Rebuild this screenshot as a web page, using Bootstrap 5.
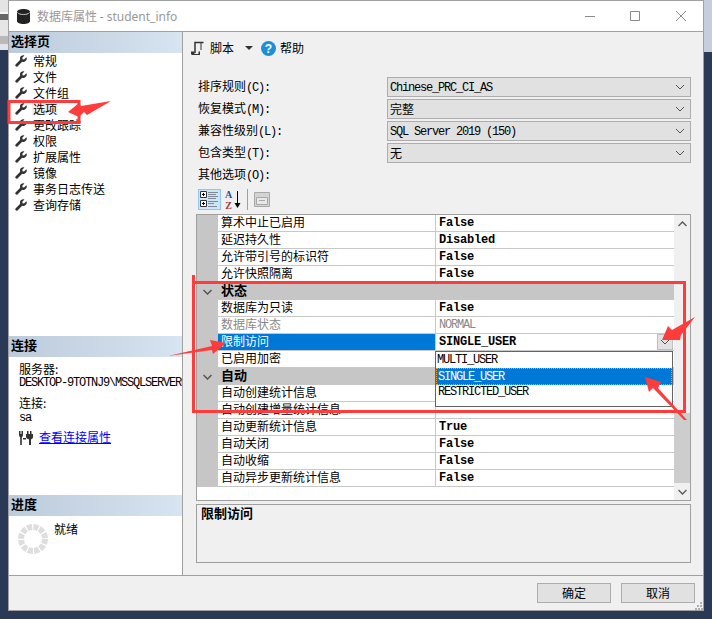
<!doctype html>
<html lang="zh-CN">
<head>
<meta charset="utf-8">
<title>数据库属性 - student_info</title>
<link rel="stylesheet" href="https://cdn.jsdelivr.net/npm/bootstrap@5.3.0/dist/css/bootstrap.min.css">
<style>
html,body{margin:0;width:712px;height:619px;overflow:hidden;background:#2a3a56}
body{font:12px/12px "Noto Sans CJK SC","Liberation Sans",sans-serif;color:#000}
.lat{font-family:"Liberation Mono","Noto Sans CJK SC",monospace;font-size:12px;letter-spacing:-1.2px}
.latb{font-family:"Liberation Mono","Noto Sans CJK SC",monospace;font-size:12px;font-weight:700;letter-spacing:-.2px}
.stage{width:712px;height:619px;position:relative}
.edge-l{width:8px;height:619px;flex:none;background:linear-gradient(#e4e4e4 0 12px,#f6f6f6 12px 14px,#666 14px 20px,#e6e6e6 20px 36px,#b9b9b9 36px 44px,#dfe3ea 44px 50px,#2a3a56 50px)}
.edge-r{width:8px;height:619px;flex:none;background:linear-gradient(#c6cddd 0 52px,#2a3a56 52px)}
.win{width:696px;height:611px;flex:none;border:1px solid #a0a0a0;background:#f0f0f0}
.titlebar{height:31px;flex:none;background:#fff;border-bottom:1px solid #a0a0a0;padding-left:8px}
.titlebar .ttl{color:#999;margin-left:7px;font-size:12px}
.titlebar .ttl b{font:400 12px "Noto Sans",sans-serif}
.wctl{margin-left:auto}
.wctl svg{display:block}
.mainarea{height:544px;flex:none;border-bottom:1px solid #a0a0a0}
.leftpane{width:174px;flex:none;background:#fff;border-right:1px solid #a0a0a0}
.paneh{height:21px;background:linear-gradient(90deg,#bccbdb,#d7e4f1);font-weight:700;padding:0 0 4px 2px;font-size:13px}
.sel-pane{height:304px}
.conn-pane{height:159px}
.prog-pane{height:79px}
.navlist{border-radius:0}
.navlist .list-group-item{border:0;background:none;padding:0 0 0 6px;height:16px;color:#000;font-size:12px;gap:6px}
.navlist .cur{background:#f0f0f0;padding:0 1px;margin-left:-1px}
.conn-body{padding:6px 0 0 10px;white-space:nowrap}
.lh{height:12px;line-height:12px}
.clipline{overflow:hidden;margin-top:2px}
.conn-link{color:#00f;text-decoration:underline;font-size:12px;line-height:14px;margin-top:-2px}
.rightpane{width:520px;flex:none;padding:0 12px 0 13px}
.rtool{height:32px;margin-left:-5px;font-size:12px}
.caret-d{width:0;height:0;border:4px solid transparent;border-top-color:#333;border-bottom:0;margin:0 8px 0 11px}
.frow{height:22px;padding-left:2px}
.frow .flab{width:189px;flex:none;font-size:12px;padding-top:3px}
.frow .form-select{height:20px;min-height:0;width:304px;padding:0 2px;border:1px solid #adadad;border-radius:0;background-color:#e1e1e1;background-size:10px 7px;background-position:right 5px center;color:#000;line-height:18px;box-shadow:none;background-image:url("data:image/svg+xml,%3csvg xmlns='http://www.w3.org/2000/svg' viewBox='0 0 10 7'%3e%3cpath fill='none' stroke='%23555' d='M1 1l4 4 4-4'/%3e%3c/svg%3e")}
.frow .sel-mono{font:12px "Liberation Mono",monospace;letter-spacing:-1.2px;padding-top:2px}
.sel-zh{font:12px "Noto Sans CJK SC",sans-serif}
.ptools{height:21px;margin-top:2px;padding-left:2px}
.sortbtn{width:23px;height:21px;background:#cde6f7;border:1px solid #8fc5ee;padding:0;border-radius:0}
.sepv{width:1px;height:21px;background:#a0a0a0;margin:0 6px 0 6px}
.pg{height:287px;margin-top:4px;border:1px solid #a0a0a0;background:#fff;position:relative}
.pg-rows{width:477px;flex:none}
.pg-row{height:17px;border-bottom:1px solid #c8c8c8}
.gut{width:21px;height:17px;flex:none;background:#c6c6c6;margin-bottom:-1px}
.pname{width:218px;flex:none;padding-left:3px;border-right:1px solid #c8c8c8;height:16px;line-height:14px;font-size:12px}
.pval{flex:1;padding-left:3px;height:16px;line-height:17px;position:relative}
.pg-row.dis .pname{color:#8a8a8a}
.pg-row.dis .pval{color:#8a8a8a;font-weight:400;letter-spacing:-1.2px}
.pg-row.on .pname{background:#0078d7;color:#fff}
.ddbtn{position:absolute;right:1px;top:0;width:16px;height:16px;background:#e1e1e1;border:1px solid #c0c0c0;display:flex;align-items:center;justify-content:center}
.pcat{height:17px;background:#c6c6c6;font-weight:700;font-size:13px}
.pcat .chev{width:21px;flex:none;display:flex;justify-content:center}
.pcat .cattxt{padding:0 0 3px 3px}
.pscroll{width:16px;flex:none;background:#f0f0f0}
.pscroll .sc-a{height:17px}
.pscroll .sc-t{height:70px;background:#cdcdcd;margin-top:auto}
.pgdrop.dropdown-menu{position:absolute;left:238px;top:136px;width:238px;height:56px;min-width:0;padding:0;margin:0;border:1px solid #646464;border-radius:0;background:#fff;z-index:2}
.pgdrop .dropdown-item{height:16px;padding:0 0 0 1px;font:12px/17px "Liberation Mono",monospace;letter-spacing:-1.2px;color:#000}
.pgdrop .dropdown-item.active{height:17px;line-height:18px;background:#0078d7;color:#fff;outline:1px dotted #f0a030;outline-offset:-1px;padding-left:2px}
.pgdrop .dropdown-item:last-child{padding-left:2px;line-height:15px}
.descbox{height:59px;margin-top:3px;border:1px solid #a0a0a0;padding:2px 4px;font-weight:700;font-size:13px}
.footbar{height:34px;flex:none;padding:7px 8px 0 0;gap:10px;position:relative}
.footbar .btn{width:74px;height:20px;padding:0;border:1px solid #adadad;border-radius:0;background:#e1e1e1;color:#000;font:12px/18px "Noto Sans CJK SC",sans-serif}
.grip{position:absolute;right:0;bottom:0}
.marks{position:absolute;left:0;top:0;pointer-events:none;z-index:5}
</style>
</head>
<body>
<svg width="0" height="0" class="d-none">
  <symbol id="wrench" viewBox="0 0 14 14">
    <path fill="#333" d="M13.2 2.7 10.6 5.2 8.8 4.9 8.5 3.2 11 .7C8.9-.2 6.4.9 5.9 3.1 5.7 3.9 5.8 4.8 6.1 5.5L.9 10.7C.1 11.5.2 12.5.8 13.1 1.4 13.7 2.4 13.8 3.2 13L8.400 7.800C10.700 8.700 13.100 7.400 13.700 5.100 13.900 4.300 13.700 3.400 13.200 2.700Z"/>
  </symbol>
</svg>
<div class="stage d-flex">
  <div class="edge-l"></div>
  <div class="win d-flex flex-column">
    <div class="titlebar d-flex align-items-center">
      <svg width="13" height="15" viewBox="0 0 13 15"><path fill="#222" d="M0 3C0 1 3 0 6.500 0S13 1 13 3V12C13 14 10 15 6.500 15S0 14 0 12Z"/><path fill="none" stroke="#ccc" d="M.5 3.500C1.500 5 4 5.500 6.500 5.500S11.500 5 12.500 3.500"/></svg>
      <span class="ttl">数据库属性 <b>- student_info</b></span>
      <div class="wctl d-flex align-items-center">
        <svg width="102" height="14" viewBox="0 0 102 14"><path stroke="#8a8a8a" d="M0 7.500H10"/><path fill="none" stroke="#8a8a8a" d="M45.500 2.500h9v9h-9z"/><path fill="none" stroke="#8a8a8a" d="M91 2l10 10M101 2L91 12"/></svg>
        <div style="width:16px"></div>
      </div>
    </div>
    <div class="mainarea d-flex">
      <div class="leftpane">
        <div class="sel-pane">
          <div class="paneh d-flex align-items-center">选择页</div>
          <div class="list-group navlist">
            <div class="list-group-item d-flex align-items-center"><svg width="12" height="12"><use href="#wrench"/></svg><span>常规</span></div>
            <div class="list-group-item d-flex align-items-center"><svg width="12" height="12"><use href="#wrench"/></svg><span>文件</span></div>
            <div class="list-group-item d-flex align-items-center"><svg width="12" height="12"><use href="#wrench"/></svg><span>文件组</span></div>
            <div class="list-group-item d-flex align-items-center"><svg width="12" height="12"><use href="#wrench"/></svg><span class="cur">选项</span></div>
            <div class="list-group-item d-flex align-items-center"><svg width="12" height="12"><use href="#wrench"/></svg><span>更改跟踪</span></div>
            <div class="list-group-item d-flex align-items-center"><svg width="12" height="12"><use href="#wrench"/></svg><span>权限</span></div>
            <div class="list-group-item d-flex align-items-center"><svg width="12" height="12"><use href="#wrench"/></svg><span>扩展属性</span></div>
            <div class="list-group-item d-flex align-items-center"><svg width="12" height="12"><use href="#wrench"/></svg><span>镜像</span></div>
            <div class="list-group-item d-flex align-items-center"><svg width="12" height="12"><use href="#wrench"/></svg><span>事务日志传送</span></div>
            <div class="list-group-item d-flex align-items-center"><svg width="12" height="12"><use href="#wrench"/></svg><span>查询存储</span></div>
          </div>
        </div>
        <div class="conn-pane">
          <div class="paneh d-flex align-items-center">连接</div>
          <div class="conn-body">
            <div class="lh">服务器:</div>
            <div class="lh lat clipline">DESKTOP-9TOTNJ9\MSSQLSERVER01</div>
            <div class="lh" style="margin-top:8px">连接:</div>
            <div class="lh lat" style="margin-top:3px">sa</div>
            <div class="d-flex align-items-center" style="margin-top:7px;height:14px;gap:5px">
              <svg width="15" height="14" viewBox="0 0 15 14"><path fill="#333" d="M0 0h1.500v3h1V0H4v3.500C4 5 3.200 6 2.800 6.500V14H1.200V6.500C.8 6 0 5 0 3.500ZM8 0H9.500V3H11V0h1.500V3H14V6C14 7.500 12.800 8 12 8.500V14H10V8.500C9 8 7 7.500 7 6V3H8Z"/><path fill="#333" d="M4 7h3v1.500H4z"/></svg>
              <a href="#" class="conn-link">查看连接属性</a>
            </div>
          </div>
        </div>
        <div class="prog-pane">
          <div class="paneh d-flex align-items-center">进度</div>
          <div class="d-flex" style="padding:8px 0 0 9px;gap:6px">
            <svg width="30" height="30" viewBox="0 0 30 30"><circle cx="15" cy="15" r="12" fill="none" stroke="#dedede" stroke-width="6" stroke-dasharray="5 1.280"/></svg>
            <span style="margin-top:-1px">就绪</span>
          </div>
        </div>
      </div>
      <div class="rightpane">
        <div class="rtool d-flex align-items-center">
          <svg width="14" height="14" viewBox="0 0 14 14" style="margin-right:5px"><path fill="none" stroke="#333" stroke-width="1.500" d="M12.500 1.500H4V12"/><path fill="#333" d="M0 10.500H3.500V13H7.500V10.500H9V14H1.500C.7 14 0 13.300 0 12.500Z"/><path fill="none" stroke="#333" d="M10 2V9"/></svg>
          <span>脚本</span>
          <span class="caret-d"></span>
          <svg width="15" height="15" viewBox="0 0 15 15" style="margin-right:4px"><circle cx="7.500" cy="7.500" r="7.500" fill="#1c8fd8"/><text x="7.500" y="12" font-family="Liberation Sans" font-weight="700" font-size="12" fill="#fff" text-anchor="middle">?</text></svg>
          <span>帮助</span>
        </div>
        <div style="margin-top:13px">
          <div class="frow d-flex align-items-start"><span class="flab">排序规则<span class="lat">(C):</span></span>
            <select class="form-select sel-mono" aria-label="排序规则"><option>Chinese_PRC_CI_AS</option></select></div>
          <div class="frow d-flex align-items-start"><span class="flab">恢复模式<span class="lat">(M):</span></span>
            <select class="form-select sel-zh" aria-label="恢复模式"><option>完整</option></select></div>
          <div class="frow d-flex align-items-start"><span class="flab">兼容性级别<span class="lat">(L):</span></span>
            <select class="form-select sel-mono" aria-label="兼容性级别"><option>SQL Server 2019 (150)</option></select></div>
          <div class="frow d-flex align-items-start"><span class="flab">包含类型<span class="lat">(T):</span></span>
            <select class="form-select sel-zh" aria-label="包含类型"><option>无</option></select></div>
          <div class="frow d-flex align-items-start"><span class="flab">其他选项<span class="lat">(O):</span></span></div>
        </div>
        <div class="ptools d-flex align-items-center">
          <button class="sortbtn d-flex align-items-center justify-content-center" aria-label="按分类排序">
            <svg width="19" height="17" viewBox="0 0 19 17"><path fill="#fff" stroke="#333" d="M.5.500h6v6h-6zM.5 9.500h6v6h-6z"/><path stroke="#000" d="M2 3.500h3M3.500 2v3M2 12.500h3M3.500 11v3"/><path stroke="#7f8a99" d="M8 1.500h10M8 3.500h8M8 5.500h10M8 7.500h8M8 10.500h10M8 12.500h6M8 15.500h9"/></svg>
          </button>
          <svg width="18" height="21" viewBox="0 0 18 21" style="margin-left:2px"><text x="5.500" y="9" font-family="Liberation Serif" font-weight="700" font-size="10" fill="#2d4fa5" text-anchor="middle">A</text><text x="5.500" y="20" font-family="Liberation Serif" font-weight="700" font-size="10" fill="#a33a3a" text-anchor="middle">Z</text><path stroke="#000" d="M14.500 2V16"/><path fill="#000" d="M11.500 14h6l-3 5z"/></svg>
          <span class="sepv"></span>
          <svg width="16" height="15" viewBox="0 0 16 15"><path fill="#d4d4d4" stroke="#a8a8a8" d="M.5.500h15v14H.5z"/><path fill="#e8e8e8" stroke="#a8a8a8" d="M2.500 5.500h11v7h-11z"/><path stroke="#a8a8a8" d="M5 8.500h6"/></svg>
        </div>
        <div class="pg d-flex">
          <div class="pg-rows">
            <div class="pg-row d-flex"><div class="gut"></div><div class="pname">算术中止已启用</div><div class="pval latb">False</div></div>
            <div class="pg-row d-flex"><div class="gut"></div><div class="pname">延迟持久性</div><div class="pval latb">Disabled</div></div>
            <div class="pg-row d-flex"><div class="gut"></div><div class="pname">允许带引号的标识符</div><div class="pval latb">False</div></div>
            <div class="pg-row d-flex"><div class="gut"></div><div class="pname">允许快照隔离</div><div class="pval latb">False</div></div>
            <div class="pcat d-flex align-items-center"><span class="chev"><svg width="9" height="6" viewBox="0 0 9 6"><path fill="none" stroke="#555" stroke-width="1.500" d="M.5 1l4 4 4-4"/></svg></span><span class="cattxt">状态</span></div>
            <div class="pg-row d-flex"><div class="gut"></div><div class="pname">数据库为只读</div><div class="pval latb">False</div></div>
            <div class="pg-row dis d-flex"><div class="gut"></div><div class="pname">数据库状态</div><div class="pval latb">NORMAL</div></div>
            <div class="pg-row on d-flex"><div class="gut"></div><div class="pname">限制访问</div><div class="pval latb">SINGLE_USER<span class="ddbtn"><svg width="10" height="7" viewBox="0 0 10 7"><path fill="none" stroke="#555" d="M1 1l4 4 4-4"/></svg></span></div></div>
            <div class="pg-row d-flex"><div class="gut"></div><div class="pname">已启用加密</div><div class="pval latb"></div></div>
            <div class="pcat d-flex align-items-center"><span class="chev"><svg width="9" height="6" viewBox="0 0 9 6"><path fill="none" stroke="#555" stroke-width="1.500" d="M.5 1l4 4 4-4"/></svg></span><span class="cattxt">自动</span></div>
            <div class="pg-row d-flex"><div class="gut"></div><div class="pname">自动创建统计信息</div><div class="pval latb"></div></div>
            <div class="pg-row d-flex"><div class="gut"></div><div class="pname">自动创建增量统计信息</div><div class="pval latb"></div></div>
            <div class="pg-row d-flex"><div class="gut"></div><div class="pname">自动更新统计信息</div><div class="pval latb">True</div></div>
            <div class="pg-row d-flex"><div class="gut"></div><div class="pname">自动关闭</div><div class="pval latb">False</div></div>
            <div class="pg-row d-flex"><div class="gut"></div><div class="pname">自动收缩</div><div class="pval latb">False</div></div>
            <div class="pg-row d-flex"><div class="gut"></div><div class="pname">自动异步更新统计信息</div><div class="pval latb">False</div></div>
          </div>
          <div class="pscroll d-flex flex-column">
            <div class="sc-a d-flex align-items-center justify-content-center"><svg width="9" height="6" viewBox="0 0 9 6"><path fill="none" stroke="#606060" stroke-width="1.500" d="M.5 5l4-4 4 4"/></svg></div>
            <div class="sc-t"></div>
            <div class="sc-a d-flex align-items-center justify-content-center"><svg width="9" height="6" viewBox="0 0 9 6"><path fill="none" stroke="#606060" stroke-width="1.500" d="M.5 1l4 4 4-4"/></svg></div>
          </div>
          <div class="dropdown-menu show pgdrop">
            <div class="dropdown-item">MULTI_USER</div>
            <div class="dropdown-item active">SINGLE_USER</div>
            <div class="dropdown-item">RESTRICTED_USER</div>
          </div>
        </div>
        <div class="descbox">限制访问</div>
      </div>
    </div>
    <div class="footbar d-flex justify-content-end">
      <button class="btn">确定</button>
      <button class="btn">取消</button>
      <svg class="grip" width="8" height="8" viewBox="0 0 8 8"><path fill="#b0b0b0" d="M5 0h2v2H5zM2 3h2v2H2zM5 3h2v2H5zM0 6h2v2H0zM3 6h2v2H3zM6 6h2v2H6z"/></svg>
    </div>
  </div>
  <div class="edge-r"></div>
  <svg class="marks" width="712" height="619" viewBox="0 0 712 619">
    <path fill="none" stroke="#ff3c3c" stroke-width="3" d="M9 101.500H79V122.500H9Z"/>
    <path fill="none" stroke="#ff3c3c" stroke-width="3" d="M193.500 275V411.500H684.500V282.500H193.500"/>
    <path fill="#ff3c3c" d="M68 112 79 103 81 106 111 101 87 115 84 112 79 117Z"/>
    <path fill="#ff3c3c" d="M168 356 212 346 210 340 226 343 213 354 212 350Z"/>
    <path fill="#ff3c3c" d="M662 340 668 326 672 330 695 317 681 335 680 340Z"/>
    <path fill="#ff3c3c" d="M645 377 661 382 658 388 687 420 684 420 653 388 649 392Z"/>
  </svg>
</div>
<script src="https://cdn.jsdelivr.net/npm/bootstrap@5.3.0/dist/js/bootstrap.bundle.min.js"></script>
</body>
</html>
